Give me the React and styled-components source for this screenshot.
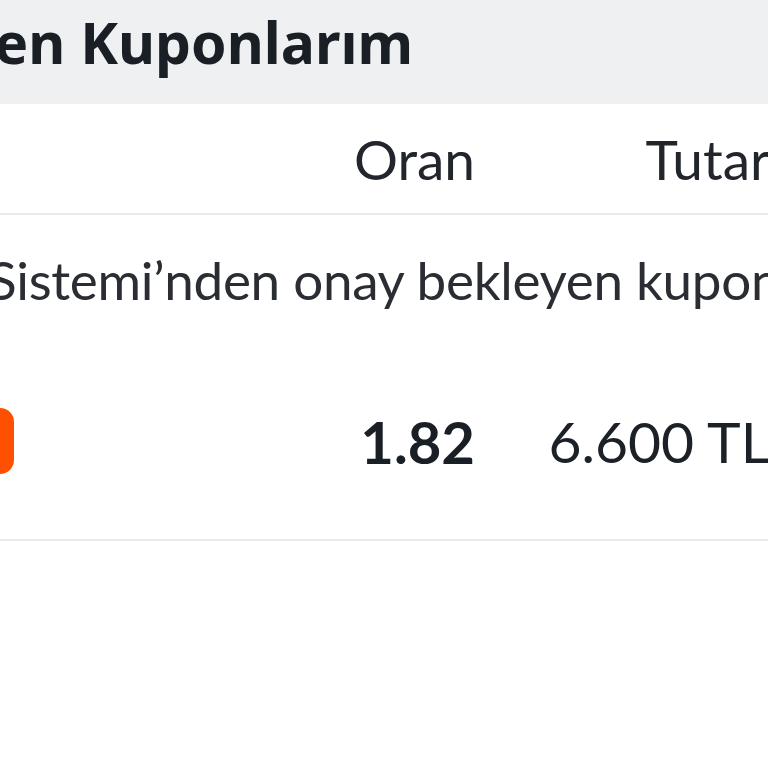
import React from 'react'
import styled, { createGlobalStyle } from 'styled-components'

const GlobalStyle = createGlobalStyle`
html, body {
  margin: 0;
  padding: 0;
  background: #ffffff;
  overflow: hidden;
}
`

const Screen = styled.div`
width: 768px;
height: 768px;
overflow: hidden;
background: #ffffff;
font-family: Lato, "Noto Sans", sans-serif;
color: #1c2027;
`

const Page = styled.div`
width: 790px;
`

const Header = styled.div`
height: 104px;
background: #eff0f2;
display: flex;
align-items: center;
`

const TitleBox = styled.div`
width: 413px;
display: flex;
justify-content: flex-end;
white-space: nowrap;
`

const Title = styled.h1`
margin: 0;
font-family: "Noto Sans", "Open Sans", sans-serif;
font-weight: 700;
font-size: 57px;
line-height: 1;
color: #1a1e25;
padding-bottom: 20px;
`

const Row = styled.div`
display: grid;
grid-template-columns: 295px 180px 295px;
align-items: center;
height: ${p => p.$height}px;
border-bottom: ${p => (p.$divider ? '2px solid #e8e9eb' : 'none')};
`

const HeadCell = styled.div`
text-align: right;
font-size: 55px;
font-weight: 400;
white-space: nowrap;
color: #22262c;
`

const Message = styled.div`
height: 128px;
display: flex;
align-items: center;
white-space: nowrap;
overflow: hidden;
`

const MessageText = styled.p`
margin: 0 0 0 -12px;
font-size: 53px;
color: #2a2e34;
letter-spacing: -0.3px;
`

const Badge = styled.div`
width: 60px;
height: 66px;
margin-left: -46px;
border-radius: 14px;
background: #ff4f00;
`

const Odds = styled.div`
text-align: right;
font-size: 58px;
font-weight: 700;
color: #1a1e25;
`

const Amount = styled.div`
text-align: right;
font-size: 57px;
font-weight: 400;
white-space: nowrap;
color: #1c2027;
`

const App = () => {
  return (
    <Screen>
      <GlobalStyle />
      <Page>
        <Header>
          <TitleBox>
            <Title>Bekleyen Kuponlarım</Title>
          </TitleBox>
        </Header>
        <Row $height={109} $divider>
          <div />
          <HeadCell>Oran</HeadCell>
          <HeadCell>Tutar</HeadCell>
        </Row>
        <Message>
          <MessageText>Sistemi’nden onay bekleyen kuponlarınız</MessageText>
        </Message>
        <Row $height={196} $divider>
          <Badge />
          <Odds>1.82</Odds>
          <Amount>6.600 TL</Amount>
        </Row>
      </Page>
    </Screen>
  )
}

export default App
